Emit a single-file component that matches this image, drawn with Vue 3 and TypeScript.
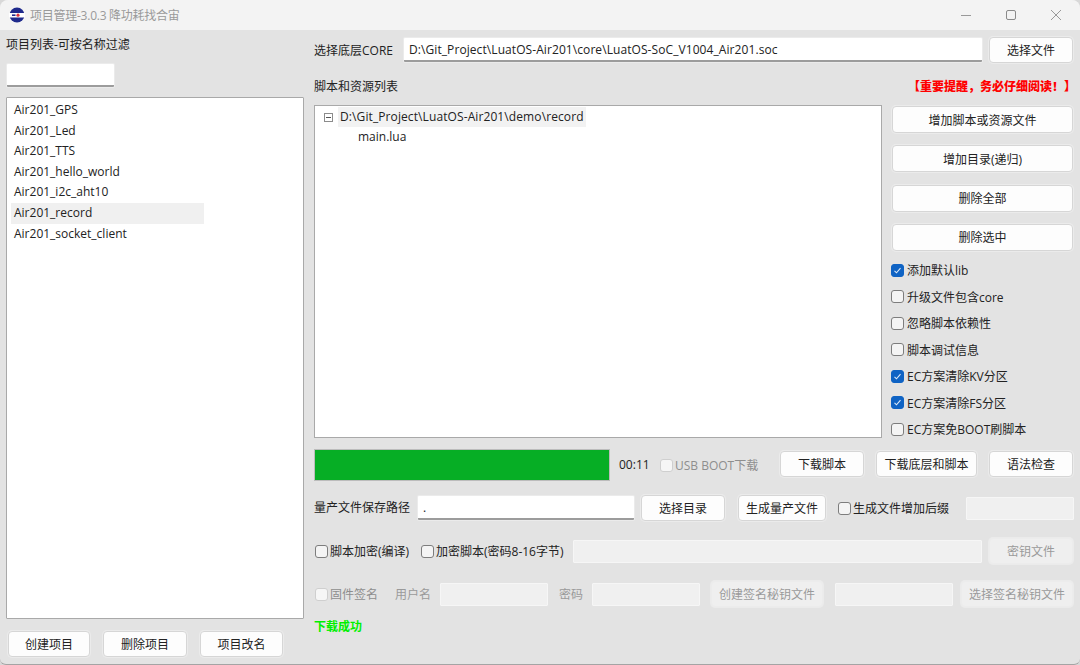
<script setup lang="ts">
const projects = [
  'Air201_GPS',
  'Air201_Led',
  'Air201_TTS',
  'Air201_hello_world',
  'Air201_i2c_aht10',
  'Air201_record',
  'Air201_socket_client',
]

const sideButtons = ['增加脚本或资源文件', '增加目录(递归)', '删除全部', '删除选中']

const options = [
  { label: '添加默认lib', checked: true },
  { label: '升级文件包含core', checked: false },
  { label: '忽略脚本依赖性', checked: false },
  { label: '脚本调试信息', checked: false },
  { label: 'EC方案清除KV分区', checked: true },
  { label: 'EC方案清除FS分区', checked: true },
  { label: 'EC方案免BOOT刷脚本', checked: false },
]
</script>

<template>
  <div class="window">
    <header class="titlebar">
      <svg class="logo" width="16" height="16" viewBox="0 0 16 16">
        <circle cx="8" cy="8" r="7.5" fill="#1f2a8c" />
        <rect x="0" y="6" width="16" height="4.5" fill="#fff" />
        <circle cx="9" cy="8.2" r="1.6" fill="#d8323c" />
        <rect x="3" y="7.4" width="3.5" height="1.6" fill="#1f2a8c" />
      </svg>
      <span class="title">项目管理-3.0.3 降功耗找合宙</span>
      <div class="controls">
        <svg width="12" height="12" viewBox="0 0 12 12"><path d="M1 6.5h10" stroke="#999" fill="none" /></svg>
        <svg width="12" height="12" viewBox="0 0 12 12"><rect x="1.5" y="1.5" width="9" height="9" rx="1.5" stroke="#8a8a8a" fill="none" /></svg>
        <svg width="12" height="12" viewBox="0 0 12 12"><path d="M1 1l10 10M11 1L1 11" stroke="#999" fill="none" /></svg>
      </div>
    </header>

    <main class="body">
      <aside class="left">
        <div class="left-label">项目列表-可按名称过滤</div>
        <input class="field filter" type="text" />
        <ul class="project-list">
          <li v-for="p in projects" :key="p" :class="{ active: p === 'Air201_record' }">{{ p }}</li>
        </ul>
        <div class="left-actions">
          <button class="btn create">创建项目</button>
          <button class="btn remove">删除项目</button>
          <button class="btn rename">项目改名</button>
        </div>
      </aside>

      <section class="right">
        <div class="row core-row">
          <label class="core-label">选择底层CORE</label>
          <input class="field core-input" type="text" value="D:\Git_Project\LuatOS-Air201\core\LuatOS-SoC_V1004_Air201.soc" />
          <button class="btn wide">选择文件</button>
        </div>

        <div class="row list-head">
          <span>脚本和资源列表</span>
          <span class="notice">【重要提醒，务必仔细阅读！】</span>
        </div>

        <div class="work">
          <div class="tree">
            <div class="tree-root">
              <span class="toggle"></span>
              <span class="tree-path">D:\Git_Project\LuatOS-Air201\demo\record</span>
            </div>
            <div class="tree-child">main.lua</div>
          </div>
          <div class="side">
            <button v-for="b in sideButtons" :key="b" class="btn side-btn">{{ b }}</button>
            <div class="options">
              <label v-for="o in options" :key="o.label" class="check">
                <span class="box" :class="{ on: o.checked }">
                  <svg v-if="o.checked" width="9" height="9" viewBox="0 0 9 9"><path d="M1.5 4.8l2 2 4-4.6" stroke="#dce9f8" stroke-width="1.1" fill="none" /></svg>
                </span>
                {{ o.label }}
              </label>
            </div>
          </div>
        </div>

        <div class="row progress-row">
          <div class="progress"></div>
          <span class="time">00:11</span>
          <label class="check disabled usb"><span class="box"></span>USB BOOT下载</label>
          <button class="btn wide">下载脚本</button>
          <button class="btn flash-all">下载底层和脚本</button>
          <button class="btn wide">语法检查</button>
        </div>

        <div class="row path-row">
          <label class="path-label">量产文件保存路径</label>
          <input class="field path-input" type="text" value="." />
          <button class="btn wide">选择目录</button>
          <button class="btn make">生成量产文件</button>
          <label class="check"><span class="box"></span>生成文件增加后缀</label>
          <input class="field off suffix" type="text" disabled />
        </div>

        <div class="row encrypt-row">
          <label class="check compile"><span class="box"></span>脚本加密(编译)</label>
          <label class="check encrypt"><span class="box"></span>加密脚本(密码8-16字节)</label>
          <input class="field off key-input" type="text" disabled />
          <button class="btn wide off-btn">密钥文件</button>
        </div>

        <div class="row sign-row">
          <label class="check disabled sign"><span class="box"></span>固件签名</label>
          <span class="muted user">用户名</span>
          <input class="field off sign-field" type="text" disabled />
          <span class="muted pass">密码</span>
          <input class="field off sign-field" type="text" disabled />
          <button class="btn off-btn make-key">创建签名秘钥文件</button>
          <input class="field off key-path" type="text" disabled />
          <button class="btn off-btn pick-key">选择签名秘钥文件</button>
        </div>

        <div class="status">下载成功</div>
      </section>
    </main>
  </div>
</template>

<style>
html,
body {
  background: #d8d8d8;
}
</style>

<style scoped>
* {
  box-sizing: border-box;
}

.window {
  width: 1080px;
  height: 665px;
  display: flex;
  flex-direction: column;
  overflow: hidden;
  border-radius: 8px 8px 6px 6px;
  border-bottom: 1px solid #a4a4a4;
  background: #e3e3e3;
  color: #222;
  font-family: "Open Sans", "Noto Sans CJK SC", sans-serif;
  font-size: 12px;
}

.titlebar {
  height: 30px;
  flex: none;
  display: flex;
  align-items: center;
  padding-left: 9px;
  background: #f3f3f3;
}

.logo {
  flex: none;
}

.title {
  margin-left: 5px;
  color: #9a9a9a;
  letter-spacing: -0.25px;
}

.controls {
  margin-left: auto;
  margin-right: 18px;
  display: flex;
  gap: 33px;
}

.body {
  flex: 1;
  display: flex;
  min-height: 0;
}

.left {
  width: 298px;
  margin-left: 6px;
  flex: none;
  display: flex;
  flex-direction: column;
}

.left-label {
  margin-top: 7px;
  line-height: 16px;
}

.filter {
  width: 107px;
  height: 23px;
  margin-top: 11px;
  margin-left: 1px;
  flex: none;
}

.project-list {
  flex: 1;
  margin: 10px 0 0;
  padding: 2px 4px;
  list-style: none;
  background: #fff;
  border: 1px solid #a9a9a9;
  border-radius: 1px;
}

.project-list li {
  height: 20.6px;
  width: 193px;
  line-height: 20.6px;
  padding-left: 3px;
}

.project-list li.active {
  background: #f0f0f0;
}

.left-actions {
  display: flex;
  margin: 12px 0 7px 2px;
}

.create {
  width: 82px;
}

.remove {
  width: 84px;
  margin-left: 13px;
}

.rename {
  width: 83px;
  margin-left: 13px;
}

.right {
  width: 759px;
  margin-left: 10px;
  flex: none;
  display: flex;
  flex-direction: column;
}

.row {
  display: flex;
  align-items: center;
}

.row > * {
  flex: none;
}

.core-row {
  margin-top: 7px;
  height: 26px;
}

.core-label {
  width: 90px;
}

.core-input {
  width: 578px;
  height: 24px;
  letter-spacing: 0.08px;
}

.core-row .btn {
  margin-left: 7px;
}

.list-head {
  margin-top: 14px;
  height: 18px;
  justify-content: space-between;
}

.notice {
  color: #ff0000;
  font-weight: 900;
  font-size: 12px;
  margin-right: -3px;
}

.work {
  display: flex;
  margin-top: 10px;
  height: 334px;
}

.tree {
  width: 568px;
  height: 333px;
  background: #fff;
  border: 1px solid #a9a9a9;
  padding: 1px 0 0 9px;
}

.tree-root {
  display: flex;
  align-items: center;
  height: 20px;
}

.toggle {
  position: relative;
  width: 9px;
  height: 9px;
  border: 1px solid #8c8c8c;
  margin-right: 5px;
}

.toggle::after {
  content: "";
  position: absolute;
  left: 1px;
  right: 1px;
  top: 3px;
  height: 1px;
  background: #555;
}

.tree-path {
  background: #f2f2f2;
  line-height: 20px;
  padding: 0 2px;
  letter-spacing: 0.1px;
}

.tree-child {
  margin-left: 34px;
  line-height: 20px;
}

.side {
  width: 181px;
  margin-left: 10px;
  display: flex;
  flex-direction: column;
}

.side .side-btn {
  width: 181px;
  height: 27px;
  margin-top: 1px;
  margin-bottom: 11.3px;
  flex: none;
}

.options {
  display: flex;
  flex-direction: column;
  gap: 10.5px;
  margin-left: -1px;
}

.options .check {
  gap: 3px;
}

.check {
  display: inline-flex;
  align-items: center;
  gap: 2px;
  height: 16px;
  white-space: nowrap;
  color: #222;
}

.box {
  width: 13px;
  height: 13px;
  flex: none;
  display: inline-flex;
  align-items: center;
  justify-content: center;
  border: 1px solid #7d7d7d;
  border-radius: 3px;
  background: #f4f4f4;
}

.box.on {
  background: #0f63c4;
  border-color: #0f63c4;
}

.check.disabled {
  color: #8e8e8e;
}

.check.disabled .box {
  border-color: #cfcfcf;
  background: #f6f6f6;
}

.progress-row {
  height: 32px;
  margin-top: 10px;
}

.progress {
  width: 296px;
  height: 32px;
  background: #06ae25;
  border: 1px solid #bcbcbc;
}

.time {
  margin-left: 9px;
  margin-bottom: 2px;
  width: 32px;
}

.usb {
  margin-left: 9px;
  width: 120px;
}

.progress-row .btn {
  margin-bottom: 2px;
}

.flash-all {
  width: 101px;
  margin-left: 12px;
  margin-right: 12px;
}

.path-row {
  height: 26px;
  margin-top: 14px;
}

.path-label {
  width: 104px;
  margin-bottom: 2px;
}

.path-input {
  width: 216px;
  height: 24px;
}

.path-row .wide {
  margin-left: 7px;
}

.path-row .make {
  width: 88px;
  margin-left: 13px;
}

.path-row .check {
  margin-left: 12px;
  width: 128px;
}

.suffix {
  width: 108px;
  height: 23px;
}

.encrypt-row {
  height: 26px;
  margin-top: 17px;
}

.compile {
  width: 106px;
  margin-left: 1px;
}

.encrypt {
  width: 152px;
}

.key-input {
  width: 409px;
  height: 23px;
}

.encrypt-row .btn {
  margin-left: 7px;
}

.sign-row {
  height: 26px;
  margin-top: 17px;
}

.sign {
  width: 63px;
  margin-left: 1px;
}

.muted {
  color: #9a9a9a;
  white-space: nowrap;
}

.user {
  width: 35px;
  margin-left: 17px;
  margin-right: 10px;
}

.pass {
  width: 22px;
  margin-left: 11px;
  margin-right: 11px;
}

.sign-field {
  width: 108px;
  height: 23px;
}

.btn.make-key {
  width: 112px;
  margin-left: 11px;
}

.key-path {
  width: 118px;
  height: 23px;
  margin-left: 12px;
}

.btn.pick-key {
  width: 112px;
  margin-left: 8px;
}

.status {
  margin-top: 12px;
  color: #00f000;
  font-weight: 700;
  line-height: 16px;
}

.field {
  display: block;
  padding: 0 5px;
  font: inherit;
  color: #222;
  background: #fff;
  border: none;
  border-bottom: 2px solid #9c9c9c;
  border-radius: 1px;
  outline: none;
  box-shadow: 0 0 0 1px #ebebeb;
}

.field.off {
  background: #f0f0f0;
  border: 1px solid #f6f6f6;
  box-shadow: none;
}

.btn {
  height: 26px;
  padding: 0;
  font: inherit;
  color: #222;
  background: #fdfdfd;
  border: 1px solid #d6d6d6;
  border-radius: 4px;
  white-space: nowrap;
  box-shadow: 0 0 0 1px #ebebeb;
}

.btn.wide {
  width: 84px;
}

.btn.off-btn {
  color: #9a9a9a;
  background: #efefef;
  border-color: #ececec;
}
</style>
